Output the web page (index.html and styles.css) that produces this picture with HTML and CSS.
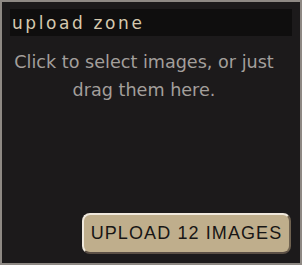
FILE: index.html
```html
<!doctype html>
<html lang="en">
<head>
    <meta charset="utf-8">
    <title>upload zone</title>
    <link rel="stylesheet" href="styles.css">
</head>
<body>
    <div class="zone">
        <div class="zone-head">
            <p class="title">upload zone</p>
        </div>
        <p class="hint">Click to select images, or just drag them here.</p>
        <button class="upload">UPLOAD 12 IMAGES</button>
    </div>
</body>
</html>
```

FILE: styles.css
```css
body {
    margin: 0;
    background: #1c1a1b;
}
p {
    margin: 0;
}
.zone {
    box-sizing: border-box;
    width: 302px;
    height: 265px;
    border: 2px solid #8e8984;
    background: #1c1a1b;
    padding: 7px 8px 9px 8px;
    display: flex;
    flex-direction: column;
}
.zone-head {
    background: #0f0e0e;
    height: 27px;
    padding-left: 2px;
    display: flex;
    align-items: center;
}
.title {
    font-family: "DejaVu Sans", sans-serif;
    font-size: 17px;
    letter-spacing: 2.6px;
    color: #d6c9ae;
}
.hint {
    font-family: "DejaVu Sans", sans-serif;
    font-size: 17.6px;
    line-height: 28px;
    color: #a39f9b;
    text-align: center;
    padding: 12px 14px 0 0;
}
.upload {
    margin-top: auto;
    margin-right: 1px;
    align-self: flex-end;
    width: 209px;
    height: 41px;
    box-sizing: border-box;
    background: #bfae8c;
    border: 2px solid;
    border-color: #efe8dc #6f6250 #5b4f45 #efe8dc;
    border-radius: 8px;
    font-family: "Liberation Sans", sans-serif;
    font-size: 18px;
    letter-spacing: 1.1px;
    color: #181615;
    padding: 0;
}
```
